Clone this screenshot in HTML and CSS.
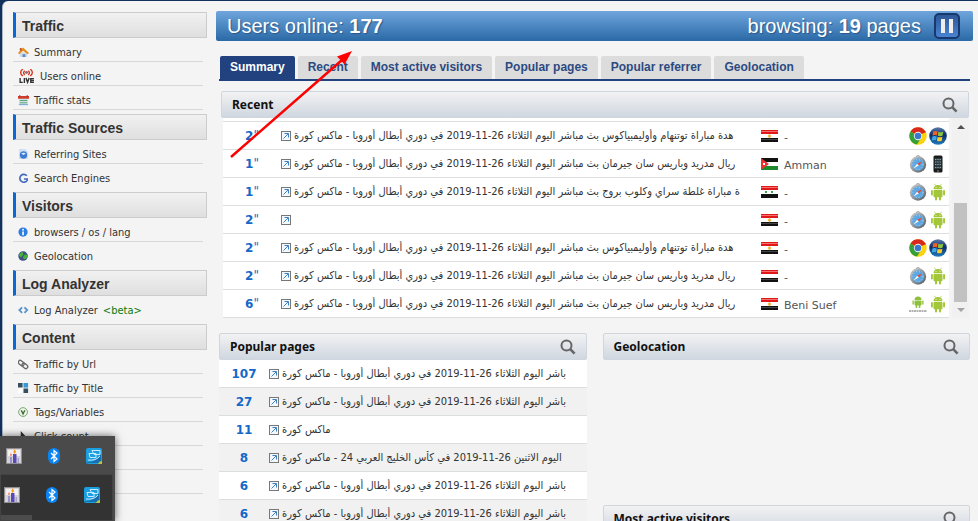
FILE: index.html
```html
<!DOCTYPE html>
<html lang="en">
<head>
  <meta charset="utf-8">
  <title>Users online</title>
  <link rel="stylesheet" href="styles.css">
</head>
<body>

  <svg class="sprite" aria-hidden="true">
    <defs>
      <linearGradient id="orb" x1="0" y1="0" x2="0" y2="1">
        <stop offset="0" stop-color="#5a7fae"/><stop offset=".45" stop-color="#0b2d66"/><stop offset="1" stop-color="#1f7fc4"/>
      </linearGradient>
      <linearGradient id="metal" x1="0" y1="0" x2="1" y2="1">
        <stop offset="0" stop-color="#d0d3d6"/><stop offset="1" stop-color="#55595d"/>
      </linearGradient>
    </defs>
    <symbol id="ext" viewBox="0 0 10 10">
      <rect x=".5" y=".5" width="9" height="9" fill="#f4f8fc" stroke="#777"/>
      <path d="M2.5 7.5L7 3M3.5 2.5h4v4" fill="none" stroke="#3b7fc4"/>
    </symbol>
    <symbol id="search" viewBox="0 0 16 16">
      <circle cx="6.5" cy="6.5" r="5" fill="none" stroke="#666" stroke-width="2"/>
      <path d="M10.2 10.2l4.4 4.4" stroke="#666" stroke-width="2.6"/>
    </symbol>
    <symbol id="eg" viewBox="0 0 17 12">
      <rect width="17" height="12" fill="#fff"/><rect width="17" height="4" fill="#e01818"/><rect y="1" width="17" height="1" fill="#f47070"/>
      <rect y="8" width="17" height="4" fill="#111"/><rect y="9" width="17" height="1" fill="#444"/>
      <path d="M8.5 4l2 2-2 2.6-2-2.6z" fill="#e8b93c"/>
    </symbol>
    <symbol id="ye" viewBox="0 0 17 12">
      <rect width="17" height="12" fill="#fff"/><rect width="17" height="4" fill="#e01818"/><rect y="1" width="17" height="1" fill="#f47070"/>
      <rect y="8" width="17" height="4" fill="#111"/><rect y="9" width="17" height="1" fill="#444"/>
    </symbol>
    <symbol id="sy" viewBox="0 0 17 12">
      <rect width="17" height="12" fill="#fff"/><rect width="17" height="4" fill="#e01818"/><rect y="1" width="17" height="1" fill="#f47070"/>
      <rect y="8" width="17" height="4" fill="#111"/><rect x="4" y="5" width="2" height="2" fill="#3aa648"/><rect x="10" y="5" width="2" height="2" fill="#3aa648"/>
    </symbol>
    <symbol id="jo" viewBox="0 0 17 12">
      <rect width="17" height="12" fill="#fff"/><rect width="17" height="4" fill="#111"/><rect y="8" width="17" height="4" fill="#1c8a2c"/>
      <path d="M0 0l8 6-8 6z" fill="#f03030"/><rect x="2" y="5" width="2" height="2" fill="#fff"/>
    </symbol>
    <symbol id="chrome" viewBox="0 0 18 18">
      <circle cx="9" cy="9" r="8.7" fill="#fcd20a"/>
      <path d="M9 9L1.5 4.6A8.7 8.7 0 0 1 16.7 5z" fill="#d9281c"/>
      <path d="M9 9L1.5 4.6A8.7 8.7 0 0 0 8 17.6L12 11z" fill="#35a03a"/>
      <path d="M9 5h7.7" stroke="#d9281c"/>
      <circle cx="9" cy="9" r="4.2" fill="#f2f2f2"/><circle cx="9" cy="9" r="3.3" fill="#3a78d0"/>
    </symbol>
    <symbol id="windows" viewBox="0 0 18 18">
      <circle cx="9" cy="9" r="8.8" fill="url(#orb)"/>
      <path d="M4.2 4.8q2.200-1.400 4.400-.3l-.7 4q-2.100-.9-4.300.2z" fill="#f0602a"/>
      <path d="M9.400 4.800q2.200 1 4.800 0l-.7 4q-2.400.9-4.800 0z" fill="#8cc63e"/>
      <path d="M3.400 9.600q2.200-1.100 4.400-.2l-.7 3.900q-2.100-.9-4.300.2z" fill="#3fa9e8"/>
      <path d="M8.600 9.700q2.200 1 4.800 0l-.7 4q-2.400 1-4.800 0z" fill="#fcc927"/>
    </symbol>
    <symbol id="safari" viewBox="0 0 18 18">
      <path d="M7 1.500q2-2 4 0" fill="none" stroke="#999"/>
      <circle cx="9" cy="9.500" r="8.200" fill="url(#metal)"/>
      <circle cx="9" cy="9.500" r="6" fill="#5aa7e4"/><circle cx="9" cy="9.500" r="5" fill="none" stroke="#b9dcf5" stroke-dasharray="1 2"/>
      <path d="M13.500 6l-3.500 4.500-1.800-1.800z" fill="#e64b30"/><path d="M4.500 13.500l3.500-4.800 1.800 1.800z" fill="#f4f4f4"/>
    </symbol>
    <symbol id="iphone" viewBox="0 0 18 18">
      <rect x="4.500" y=".5" width="9" height="17" rx="1.500" fill="#1b1b1b"/>
      <rect x="5.500" y="3" width="7" height="11" fill="#2d3b40"/>
      <path d="M6 4.500h6M6 7h6M6 9.500h6M6 12.500h6" stroke="#8aa" stroke-dasharray="1 .7"/>
      <circle cx="9" cy="16" r=".8" fill="#999"/>
    </symbol>
    <symbol id="android" viewBox="0 0 18 18">
      <g fill="#a4c639"><path d="M4.500 6.300a4.500 4.200 0 0 1 9 0z"/><rect x="4.500" y="7" width="9" height="7.300" rx="1"/>
      <rect x="2" y="7" width="1.900" height="5.500" rx=".9"/><rect x="14.100" y="7" width="1.900" height="5.500" rx=".9"/>
      <rect x="6" y="13" width="2" height="4.500" rx="1"/><rect x="10" y="13" width="2" height="4.500" rx="1"/></g>
      <path d="M5.500 .8l1.300 2M12.500 .8l-1.300 2" stroke="#a4c639" stroke-width=".7"/>
      <circle cx="7" cy="4.600" r=".5" fill="#fff"/><circle cx="11" cy="4.600" r=".5" fill="#fff"/>
    </symbol>
    <symbol id="android-logo" viewBox="0 0 18 18">
      <g fill="#8fc03c"><path d="M5.500 5a3.500 3.500 0 0 1 7 0z"/><rect x="5.500" y="5.500" width="7" height="5" rx="1"/>
      <rect x="3.500" y="5.500" width="1.300" height="4"/><rect x="13.200" y="5.500" width="1.300" height="4"/>
      <rect x="6.700" y="10" width="1.500" height="3"/><rect x="9.800" y="10" width="1.500" height="3"/></g>
      <path d="M0 16h18" stroke="#999" stroke-width="1.600" stroke-dasharray="2 .5"/>
    </symbol>
    <symbol id="candle" viewBox="0 0 16 16">
      <rect x=".5" y=".5" width="15" height="15" fill="#d4d4d8" stroke="#8f8f94"/><rect x="2" y="2" width="12" height="6" fill="#f5f0f0"/>
      <rect x="7" y="6" width="3.500" height="9" fill="#5a48b8"/><rect x="4" y="9" width="2" height="6" fill="#9a92c8"/><rect x="11.500" y="10" width="1.500" height="5" fill="#a8a4c8"/>
      <path d="M8.700 1l1.400 3-1.400 2-1.400-2z" fill="#f29a1e"/><path d="M5 5l.8 2-.8 1.500-.8-1.500z" fill="#f25a3e"/>
    </symbol>
    <symbol id="bluetooth" viewBox="0 0 16 16">
      <rect x="2" width="12" height="16" rx="6" fill="#0a84f4"/>
      <path d="M5 5l6 6-3 2.500v-11L11 5l-6 6" fill="none" stroke="#fff" stroke-width="1.200"/>
    </symbol>
    <symbol id="network" viewBox="0 0 16 16">
      <rect width="16" height="16" rx="2" fill="#1c9fe0"/>
      <path d="M1 14q8 1 14-8v9H1z" fill="#1670b0"/>
      <path d="M6 2.500h8v4H8zM3 5.500h7v4H4zM2 12q8 1 12-4" fill="none" stroke="#c8ecff"/>
      <path d="M12 16q1-3 4-3v3z" fill="#b9c43c"/>
    </symbol>
  </svg>

  <div class="page">
    <nav class="sidebar">
      <section>
        <h2>Traffic</h2>
        <ul>
          <li><a href="#"><svg class="icon" viewBox="0 0 12 12"><path d="M2 6h8v5H2z" fill="#cfdae6"/><path d="M5 8h3v3H5z" fill="#5c86bb"/><path d="M0 6.500L5.500 .5l6.500 6-1.300 1.300L5.500 4 1.300 7.800z" fill="#e98b1c"/><path d="M2 1h2v3H2z" fill="#b5581c"/></svg>Summary</a></li>
          <li><a href="#"><svg class="icon live" viewBox="0 0 16 14"><path d="M4.500 0q-4 3 0 6.500M6.300 1.500q-2 2 0 4M11.500 0q4 3 0 6.500M9.700 1.500q2 2 0 4" fill="none" stroke="#d8371e" stroke-width="1.300"/><circle cx="8" cy="3.300" r="1.400" fill="#777"/><path d="M2 8.500v4h2.500M6 8.500V13M7.500 8.500L9 12.500l1.500-4M15 9h-3v3.500h3M12 10.800h3" fill="none" stroke="#333" stroke-width="1.300"/></svg>Users online</a></li>
          <li><a href="#"><svg class="icon" viewBox="0 0 12 12"><path d="M1 2h10v9H1z" fill="#cfe2f2"/><path d="M0 1h12v3H0z" fill="#cf3f2c"/><path d="M2 0v2M10 0v2" stroke="#833"/><path d="M2 6h8M2 8.500h8" stroke="#58a060"/><path d="M1 10.500h10" stroke="#6f9fd0"/></svg>Traffic stats</a></li>
        </ul>
      </section>
      <section>
        <h2>Traffic Sources</h2>
        <ul>
          <li><a href="#"><svg class="icon" viewBox="0 0 12 12"><path d="M1 0h7l3 3v8H1z" fill="#cfe0f3"/><circle cx="6" cy="6.500" r="4" fill="#3f7cd0"/><path d="M3.500 5q2.500-2 5 0L6 6.500z" fill="#d8ecff"/></svg>Referring Sites</a></li>
          <li><a href="#"><svg class="icon" viewBox="0 0 12 12"><path d="M9.600 3A4.300 4.300 0 1 0 10 8V6.500H6.500" fill="none" stroke="#4468bd" stroke-width="1.800"/></svg>Search Engines</a></li>
        </ul>
      </section>
      <section>
        <h2>Visitors</h2>
        <ul>
          <li><a href="#"><svg class="icon" viewBox="0 0 12 12"><circle cx="5.500" cy="5.500" r="5" fill="#2d7de0"/><path d="M5.500 5v4" stroke="#fff" stroke-width="1.800"/><circle cx="5.500" cy="3" r="1" fill="#fff"/></svg>browsers / os / lang</a></li>
          <li><a href="#"><svg class="icon" viewBox="0 0 12 12"><circle cx="5.500" cy="5.500" r="5.200" fill="#3d4f86"/><path d="M1 5q1-4 4-4l1 3-3 3zM7 4l3 0q1 3-2 5L5 8z" fill="#46b03c"/></svg>Geolocation</a></li>
        </ul>
      </section>
      <section>
        <h2>Log Analyzer</h2>
        <ul>
          <li><a href="#"><svg class="icon" viewBox="0 0 12 12"><path d="M4.500 2.500L1.500 5.500l3 3M7 2.500l3 3-3 3" fill="none" stroke="#5a94cc" stroke-width="2"/></svg>Log Analyzer <span class="beta">&lt;beta&gt;</span></a></li>
        </ul>
      </section>
      <section>
        <h2>Content</h2>
        <ul>
          <li><a href="#"><svg class="icon" viewBox="0 0 12 12"><g fill="none" stroke="#666" stroke-width="1.400"><rect x="0" y="2.500" width="7" height="4" rx="2" transform="rotate(40 3.500 4.500)"/><rect x="4" y="5.500" width="7" height="4" rx="2" transform="rotate(40 7.500 7.500)"/></g></svg>Traffic by Url</a></li>
          <li><a href="#"><svg class="icon" viewBox="0 0 12 12"><path d="M0 0h5v5H0zM6 6h5v5H6z" fill="#36505f"/><path d="M6 0h5v5H6z" fill="#3498db"/><path d="M0 6h5v5H0z" fill="#fff"/></svg>Traffic by Title</a></li>
          <li><a href="#"><svg class="icon" viewBox="0 0 12 12"><circle cx="5.500" cy="5.500" r="4.800" fill="#eef6ea" stroke="#6fa067"/><path d="M3.500 3.500l2 4 2-4" fill="none" stroke="#3f6d3c" stroke-width="1.500"/></svg>Tags/Variables</a></li>
          <li><a href="#"><svg class="icon" viewBox="0 0 12 12"><path d="M3 0v10l2.500-2L8 12l1-.5L7 7.500h3z" fill="#333"/></svg>Click count</a></li>
          <li></li>
          <li></li>
        </ul>
      </section>
    </nav>

    <main class="main">
      <header class="banner">
        <span>Users online: <b>177</b></span>
        <span class="browsing">browsing: <b>19</b> pages</span>
        <button type="button" class="pause" aria-label="Pause"><svg viewBox="0 0 14 14"><path d="M1 0h4v14H1zM9 0h4v14H9z" fill="#eee"/></svg></button>
      </header>

      <nav class="tabs">
        <a href="#" class="active">Summary</a>
        <a href="#">Recent</a>
        <a href="#">Most active visitors</a>
        <a href="#">Popular pages</a>
        <a href="#">Popular referrer</a>
        <a href="#">Geolocation</a>
      </nav>

      <section class="panel recent">
        <h3>Recent <svg class="search"><use href="#search"/></svg></h3>
        <div class="scroller">
          <table class="visits">
            <colgroup><col class="c-time"><col><col class="c-flag"><col class="c-city"><col class="c-agent"></colgroup>
            <tr>
              <td class="num">2<sup>"</sup></td>
              <td><a href="#" class="title"><svg class="ext"><use href="#ext"/></svg>هدة مباراة توتنهام وأوليمبياكوس بث مباشر اليوم الثلاثاء 26-11-2019 في دوري أبطال أوروبا - ماكس كورة</a></td>
              <td><svg class="flag"><use href="#eg"/></svg></td>
              <td class="city">-</td>
              <td><div class="agent"><svg><use href="#chrome"/></svg><svg><use href="#windows"/></svg></div></td>
            </tr>
            <tr>
              <td class="num">1<sup>"</sup></td>
              <td><a href="#" class="title"><svg class="ext"><use href="#ext"/></svg>ريال مدريد وباريس سان جيرمان بث مباشر اليوم الثلاثاء 26-11-2019 في دوري أبطال أوروبا - ماكس كورة</a></td>
              <td><svg class="flag"><use href="#jo"/></svg></td>
              <td class="city">Amman</td>
              <td><div class="agent"><svg><use href="#safari"/></svg><svg><use href="#iphone"/></svg></div></td>
            </tr>
            <tr>
              <td class="num">1<sup>"</sup></td>
              <td><a href="#" class="title"><svg class="ext"><use href="#ext"/></svg>ة مباراة غلطة سراي وكلوب بروج بث مباشر اليوم الثلاثاء 26-11-2019 في دوري أبطال أوروبا - ماكس كورة</a></td>
              <td><svg class="flag"><use href="#sy"/></svg></td>
              <td class="city">-</td>
              <td><div class="agent"><svg><use href="#safari"/></svg><svg><use href="#android"/></svg></div></td>
            </tr>
            <tr>
              <td class="num">2<sup>"</sup></td>
              <td><a href="#" class="title"><svg class="ext"><use href="#ext"/></svg></a></td>
              <td><svg class="flag"><use href="#eg"/></svg></td>
              <td class="city">-</td>
              <td><div class="agent"><svg><use href="#safari"/></svg><svg><use href="#android"/></svg></div></td>
            </tr>
            <tr>
              <td class="num">2<sup>"</sup></td>
              <td><a href="#" class="title"><svg class="ext"><use href="#ext"/></svg>هدة مباراة توتنهام وأوليمبياكوس بث مباشر اليوم الثلاثاء 26-11-2019 في دوري أبطال أوروبا - ماكس كورة</a></td>
              <td><svg class="flag"><use href="#eg"/></svg></td>
              <td class="city">-</td>
              <td><div class="agent"><svg><use href="#chrome"/></svg><svg><use href="#windows"/></svg></div></td>
            </tr>
            <tr>
              <td class="num">2<sup>"</sup></td>
              <td><a href="#" class="title"><svg class="ext"><use href="#ext"/></svg>ريال مدريد وباريس سان جيرمان بث مباشر اليوم الثلاثاء 26-11-2019 في دوري أبطال أوروبا - ماكس كورة</a></td>
              <td><svg class="flag"><use href="#ye"/></svg></td>
              <td class="city">-</td>
              <td><div class="agent"><svg><use href="#safari"/></svg><svg><use href="#android"/></svg></div></td>
            </tr>
            <tr>
              <td class="num">6<sup>"</sup></td>
              <td><a href="#" class="title"><svg class="ext"><use href="#ext"/></svg>ريال مدريد وباريس سان جيرمان بث مباشر اليوم الثلاثاء 26-11-2019 في دوري أبطال أوروبا - ماكس كورة</a></td>
              <td><svg class="flag"><use href="#eg"/></svg></td>
              <td class="city">Beni Suef</td>
              <td><div class="agent"><svg><use href="#android-logo"/></svg><svg><use href="#android"/></svg></div></td>
            </tr>
          </table>
          <div class="scrollbar">
            <span class="up"></span>
            <span class="thumb"></span>
            <span class="down"></span>
          </div>
        </div>
      </section>

      <div class="columns">
        <section class="panel">
          <h3>Popular pages <svg class="search"><use href="#search"/></svg></h3>
          <table class="popular">
            <colgroup><col class="c-count"><col></colgroup>
            <tr><td class="num">107</td><td><a href="#" class="title"><svg class="ext"><use href="#ext"/></svg>باشر اليوم الثلاثاء 26-11-2019 في دوري أبطال أوروبا - ماكس كورة</a></td></tr>
            <tr><td class="num">27</td><td><a href="#" class="title"><svg class="ext"><use href="#ext"/></svg>باشر اليوم الثلاثاء 26-11-2019 في دوري أبطال أوروبا - ماكس كورة</a></td></tr>
            <tr><td class="num">11</td><td><a href="#" class="title"><svg class="ext"><use href="#ext"/></svg>ماكس كورة</a></td></tr>
            <tr><td class="num">8</td><td><a href="#" class="title"><svg class="ext"><use href="#ext"/></svg>اليوم الاثنين 26-11-2019 في كأس الخليج العربي 24 - ماكس كورة</a></td></tr>
            <tr><td class="num">6</td><td><a href="#" class="title"><svg class="ext"><use href="#ext"/></svg>باشر اليوم الثلاثاء 26-11-2019 في دوري أبطال أوروبا - ماكس كورة</a></td></tr>
            <tr><td class="num">6</td><td><a href="#" class="title"><svg class="ext"><use href="#ext"/></svg>باشر اليوم الثلاثاء 26-11-2019 في دوري أبطال أوروبا - ماكس كورة</a></td></tr>
          </table>
        </section>
        <div class="side">
          <section class="panel geo">
            <h3>Geolocation <svg class="search"><use href="#search"/></svg></h3>
          </section>
          <section class="panel">
            <h3>Most active visitors <svg class="search"><use href="#search"/></svg></h3>
          </section>
        </div>
      </div>
    </main>
  </div>

  <!-- arrow pointing at the visitor counter -->
  <svg class="arrow" viewBox="0 0 124 110">
    <path d="M2 107L113 10" stroke="#f00" stroke-width="2.500"/>
    <path d="M123 1L108 6.500l4 4 3.500 4z" fill="#f00"/>
  </svg>

  <!-- system tray flyouts -->
  <div class="tray tray-back">
    <svg><use href="#candle"/></svg>
    <svg><use href="#bluetooth"/></svg>
    <svg><use href="#network"/></svg>
  </div>
  <div class="tray tray-front">
    <svg><use href="#candle"/></svg>
    <svg><use href="#bluetooth"/></svg>
    <svg><use href="#network"/></svg>
    <span class="taskbar"></span>
  </div>

</body>
</html>
```
FILE: styles.css
```css
* {
  box-sizing: border-box;
}

body {
  margin: 0;
  height: 100vh;
  overflow: hidden;
  position: relative;
  background-color: #12305c;
  font-family: "DejaVu Sans Condensed", "DejaVu Sans", sans-serif;
  font-size: 11px;
  color: #333;
}

a {
  color: inherit;
  text-decoration: none;
}

.sprite {
  position: absolute;
  width: 0;
  height: 0;
}

.page {
  display: flex;
  gap: 9px;
  height: 100vh;
  margin: 1px 0 0 2px;
  padding: 10px 5px 0 10px;
  overflow: hidden;
  background-color: #f4f4f4;
  border-left: 1px solid #a9b4c4;
  border-top-left-radius: 6px;
}

/* sidebar */
.sidebar {
  flex: none;
  width: 194px;
  display: flex;
  flex-direction: column;
  gap: 4px;
  padding-top: 1px;
}

.sidebar h2 {
  margin: 0;
  height: 26px;
  padding-left: 6px;
  line-height: 26px;
  font-family: "Liberation Sans", Arial, sans-serif;
  font-size: 14px;
  color: #333;
  background: linear-gradient(#f1f1f1, #dfdfdf);
  border: 1px solid #ccc;
  border-left: 3px solid #0a68d4;
}

.sidebar ul {
  list-style: none;
  margin: 0 4px 0 0;
  padding: 0;
}

.sidebar li {
  height: 24px;
  padding: 2px 0 0 5px;
  border-bottom: 1px solid #d8d8d8;
}

.sidebar section:not(:first-child):not(:last-child) li:last-child {
  border-bottom-color: transparent;
}

.sidebar li a {
  display: flex;
  align-items: center;
  gap: 5px;
  height: 24px;
}

.sidebar .icon {
  flex: none;
  width: 11px;
  height: 11px;
}

.sidebar .icon.live {
  width: 17px;
  height: 15px;
}

.beta {
  color: #0a7a0a;
}

/* main area */
.main {
  flex: 1;
  min-width: 0;
}

.banner {
  display: flex;
  align-items: center;
  height: 30px;
  padding: 0 13px 0 11px;
  border-radius: 2px;
  background: linear-gradient(#6fa5dc, #2a69a6);
  color: #fff;
  font-family: "Liberation Sans", Arial, sans-serif;
  font-size: 20px;
  line-height: 28px;
  text-shadow: 1px 1px 1px #28588c;
}

.browsing {
  margin-left: auto;
}

.pause {
  display: flex;
  align-items: center;
  justify-content: center;
  width: 26px;
  height: 26px;
  margin-left: 13px;
  padding: 0;
  border: 2px solid #17386e;
  border-radius: 5px;
  background: linear-gradient(#2d5796, #4a83d2);
}

.pause svg {
  width: 14px;
  height: 14px;
}

.tabs {
  display: flex;
  gap: 3px;
  margin: 15px 3px 10px;
  padding-left: 1px;
  border-bottom: 2px solid #22417f;
}

.tabs a {
  height: 23px;
  padding: 0 10px;
  line-height: 22px;
  border-radius: 2px 2px 0 0;
  background-color: #dcdcdc;
  color: #2c4a82;
  font-family: "Liberation Sans", Arial, sans-serif;
  font-size: 12px;
  font-weight: bold;
}

.tabs .active {
  background-color: #22417f;
  color: #fff;
}

/* panels */
.panel h3 {
  display: flex;
  align-items: center;
  justify-content: space-between;
  height: 27px;
  margin: 0;
  padding: 0 10px;
  border: 1px solid #d0d6de;
  border-radius: 2px;
  background: linear-gradient(#f2f2f3, #d0d7e0);
  color: #111;
  font-family: "Noto Sans", sans-serif;
  font-size: 12px;
}

.search {
  width: 16px;
  height: 16px;
}

.recent {
  margin: 0 4px 15px 5px;
}

.scroller {
  display: flex;
  gap: 3px;
  padding-left: 2px;
}

table {
  width: 100%;
  table-layout: fixed;
  border-collapse: separate;
  border-spacing: 0;
  background-color: #fff;
}

td {
  height: 28px;
  padding: 0;
  border-bottom: 1px solid #dcdfdf;
}

.visits {
  flex: 1;
  padding-top: 3px;
}

.visits tr:first-child td {
  height: 29px;
  border-top: 1px solid #dcdfdf;
}

.c-time {
  width: 58px;
}

.c-flag {
  width: 23px;
}

.c-city {
  width: 125px;
}

.c-agent {
  width: 40px;
}

.c-count {
  width: 50px;
}

.num {
  text-align: center;
  color: #1468c8;
  font-family: "DejaVu Sans", Verdana, sans-serif;
  font-size: 12px;
  font-weight: bold;
}

.num sup {
  font-size: 12px;
  font-weight: normal;
  line-height: 1;
  vertical-align: 1px;
}

.title {
  display: flex;
  align-items: center;
  gap: 3px;
  overflow: hidden;
  white-space: nowrap;
}

.ext {
  flex: none;
  width: 10px;
  height: 10px;
}

.flag {
  display: block;
  width: 17px;
  height: 12px;
}

td.city {
  padding-top: 4px;
  font-family: "DejaVu Sans", Verdana, sans-serif;
  color: #555;
}

.agent {
  display: flex;
  gap: 2px;
}

.agent svg {
  width: 18px;
  height: 18px;
}

.scrollbar {
  flex: none;
  display: flex;
  flex-direction: column;
  align-items: center;
  width: 17px;
  padding: 7px 0 6px;
  background-color: #f1f1f1;
}

.up,
.down {
  border: 4px solid transparent;
}

.up {
  border-top: 0;
  border-bottom-color: #505050;
}

.down {
  margin-top: 6px;
  border-bottom: 0;
  border-top-color: #a3a3a3;
}

.thumb {
  width: 13px;
  height: 53%;
  margin-top: auto;
  background-color: #c1c1c1;
}

.columns {
  display: grid;
  grid-template-columns: 1fr 1fr;
  gap: 16px;
  margin: 0 3px;
}

.popular tr:nth-child(even) {
  background-color: #f1f1f1;
}

.popular .title {
  margin-right: 5px;
}

.geo {
  height: 172px;
}

/* overlays */
.arrow {
  position: absolute;
  left: 229px;
  top: 50px;
  width: 124px;
  height: 110px;
}

.tray {
  position: absolute;
  left: 0;
  bottom: 0;
  display: flex;
  align-items: flex-start;
  gap: 24px;
  background-color: #4a4a4a;
}

.tray svg {
  width: 16px;
  height: 16px;
}

.tray-back {
  width: 115px;
  height: 85px;
  padding: 12px 6px;
  box-shadow: 0 0 8px rgba(0, 0, 0, 0.6);
}

.tray-front {
  width: 113px;
  height: 47px;
  padding: 12px 3px;
  background-color: #333;
  border: 1px solid #444;
}

.taskbar {
  position: absolute;
  left: 0;
  bottom: 0;
  width: 31px;
  height: 5px;
  background-color: #4c4c4c;
}
```
